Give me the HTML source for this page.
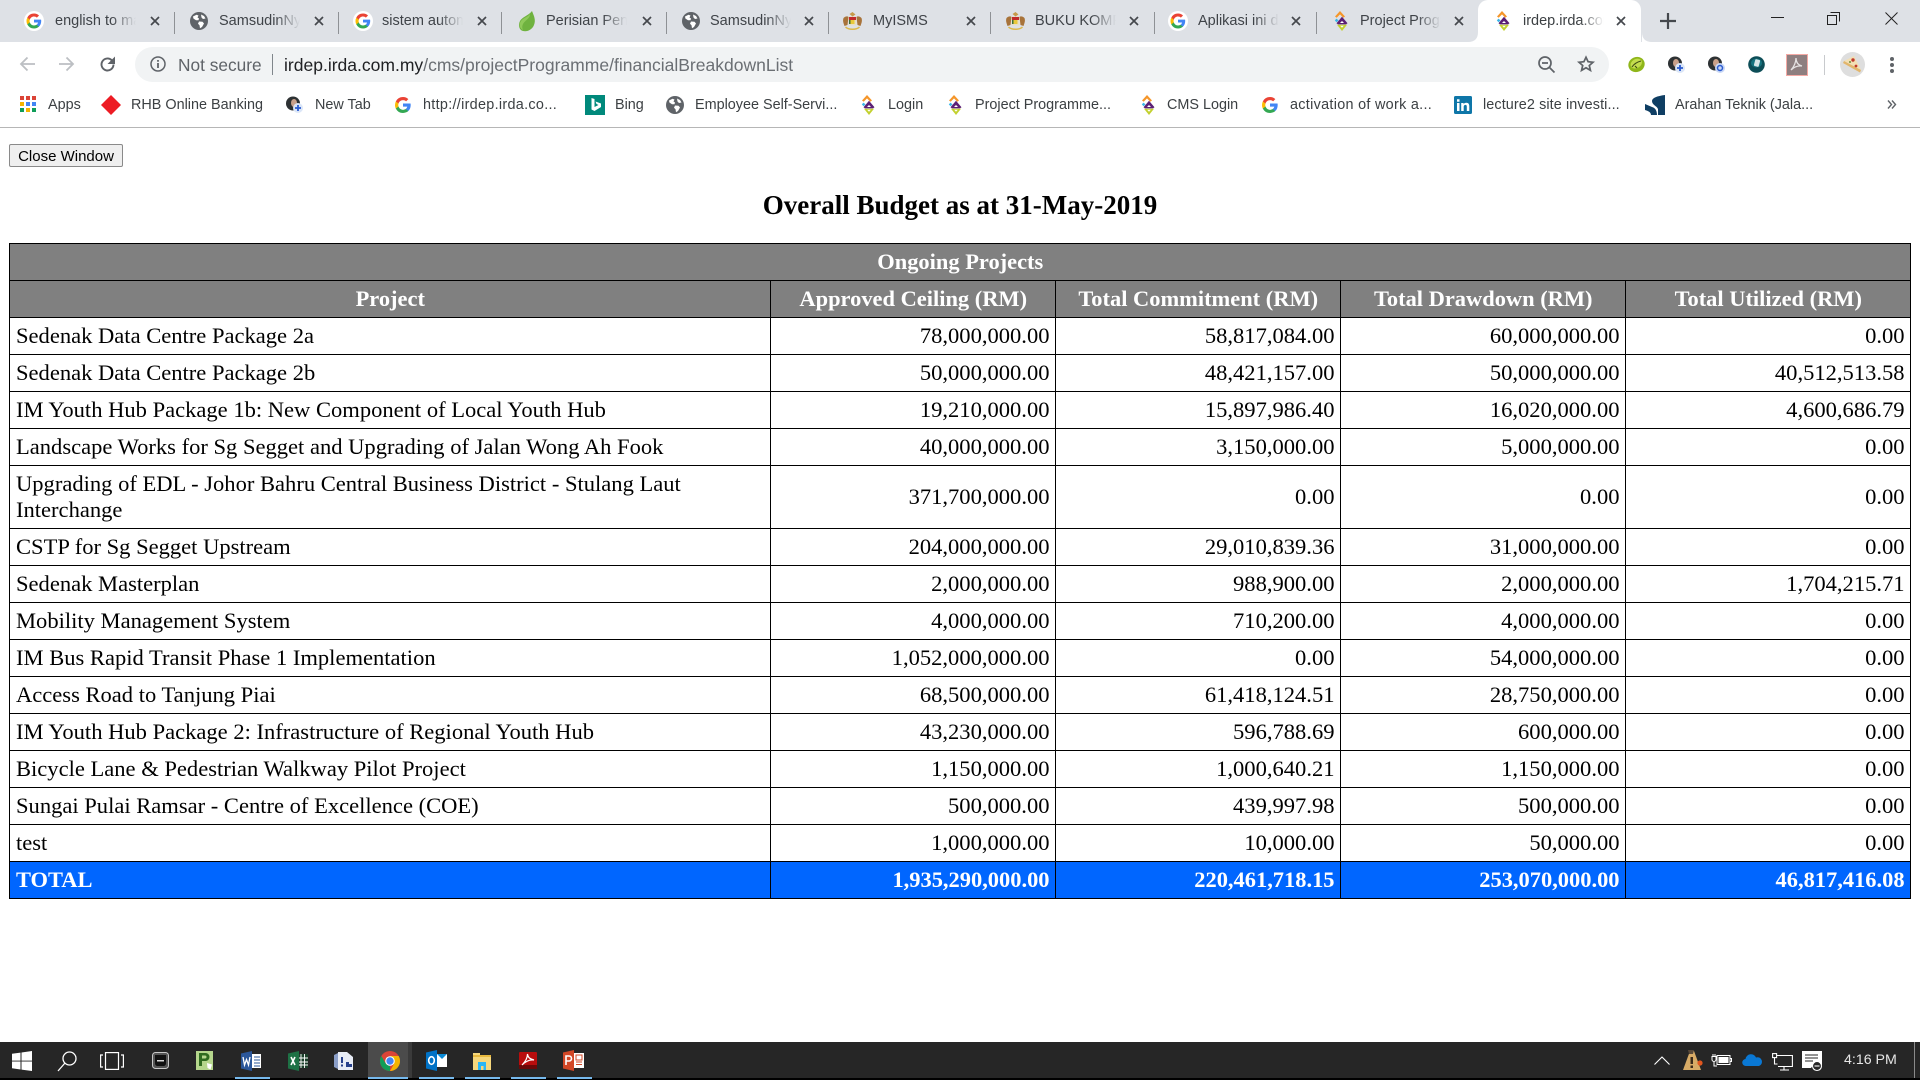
<!DOCTYPE html>
<html lang="en"><head><meta charset="utf-8"><title>irdep.irda.com.my</title>
<style>
html,body{margin:0;padding:0;width:1920px;height:1080px;overflow:hidden;background:#fff}
body{position:relative;font-family:"Liberation Sans",sans-serif}
.a{position:absolute}
.t{position:absolute;white-space:nowrap;line-height:20px}
.tab{top:11px;font-size:14.5px;color:#3f4348;width:81px;overflow:hidden;-webkit-mask-image:linear-gradient(90deg,#000 70%,transparent 100%);mask-image:linear-gradient(90deg,#000 70%,transparent 100%)}
.sep{position:absolute;top:12px;width:1px;height:22px;background:#8e9195}
.bm{top:95px;font-size:14.4px;color:#3c4043}
svg.i{position:absolute;overflow:visible}
table{position:absolute;left:9px;top:243px;width:1901px;border-collapse:collapse;table-layout:fixed;font-family:"Liberation Serif",serif;font-size:22.55px;line-height:25.6px;color:#000}
td,th{border:1px solid #000;padding:0 5.5px 0 6px;height:36px;box-sizing:border-box;vertical-align:middle}
tr{height:37px}
td+td{text-align:right}
th{background:#808080;color:#fff;font-weight:bold;text-align:center;font-size:22.45px}
.total td{background:#0066ff;color:#fff;font-weight:bold;font-size:22.45px}
button{position:absolute;left:9px;top:144px;width:114px;height:23px;font:15px "Liberation Sans",sans-serif;color:#000;background:#efefef;border:1px solid #8a8a8a;border-radius:2px;padding:2px 0 0;line-height:20px}
h1{position:absolute;left:0;top:188px;width:1920px;margin:0;text-align:center;font:bold 27px/34px "Liberation Serif",serif;color:#000}
.tb{position:absolute;left:0;top:1042px;width:1920px;height:36px;background:#262626}
.ul{position:absolute;top:1077px;height:2px;background:#76b9ed}
</style></head><body>

<svg width="0" height="0" style="position:absolute">
<defs>
<symbol id="g" viewBox="-3 -3 24 24"><circle cx="9" cy="9" r="12" fill="#fff"/><path fill="#4285F4" d="M17.64 9.2c0-.64-.06-1.25-.16-1.84H9v3.48h4.84a4.14 4.14 0 0 1-1.8 2.72v2.26h2.92c1.7-1.57 2.68-3.88 2.68-6.62z"/><path fill="#34A853" d="M9 18c2.43 0 4.47-.8 5.96-2.18l-2.92-2.26c-.8.54-1.83.86-3.04.86-2.34 0-4.32-1.58-5.03-3.7H.96v2.33A9 9 0 0 0 9 18z"/><path fill="#FBBC05" d="M3.97 10.72A5.4 5.4 0 0 1 3.68 9c0-.6.1-1.18.29-1.72V4.95H.96A9 9 0 0 0 0 9c0 1.45.35 2.83.96 4.05l3.01-2.33z"/><path fill="#EA4335" d="M9 3.58c1.32 0 2.5.45 3.44 1.35l2.58-2.59C13.46.89 11.43 0 9 0A9 9 0 0 0 .96 4.95l3.01 2.33C4.68 5.16 6.66 3.58 9 3.58z"/></symbol>
<symbol id="globe" viewBox="0 0 18 18"><circle cx="9" cy="9" r="9" fill="#5f6368"/><path fill="#fff" d="M3 4.500l3.500-1.800 2 .8-1 2 1.500 1-.5 1.700H6L3.400 6.500zM11 2.500l3 1.500 1.500 2.500-2.500.5-1.500-1.500zM9 9.500l3.500.3 1.500 1.700-2 3.500-2 1.200-.5-3-1.500-1.500z"/></symbol>
<symbol id="irda" viewBox="0 0 16 20"><path fill="#f5962a" d="M7 0l5 5.500-1.700 1.200L7 3.400 3.700 6.700 2 5.500z"/><path fill="#38b6e8" d="M3.500 7.600l2 1.800-2 1.800-1.700-1.800z"/><path fill="#5b1f75" d="M9 5.800l5.500 6.400-1.500 1.200H5l-1.500-1.200z"/><path fill="#fff" d="M9 10l2 2H7z"/><path fill="#c3d12f" d="M4 13.800h10L9 20z"/><path fill="#fff" d="M7.200 14.800h3.600L9 16.800z"/></symbol>
<symbol id="crest" viewBox="0 0 20 20"><path fill="#c69a4a" d="M10 1l3 2.500-3 2-3-2.500z"/><path fill="#a8733a" d="M1 7c2-2 4-2 5-1l-1 8-3 1c-1-3-2-5-1-8zM19 7c-2-2-4-2-5-1l1 8 3 1c1-3 2-5 1-8z"/><rect x="6" y="5.500" width="8" height="9" rx="1" fill="#e8dfc4"/><rect x="6.500" y="6" width="7" height="3" fill="#c22b2b"/><rect x="8" y="9" width="4" height="4" fill="#e9c93a"/><path fill="#3d6f3a" d="M6.500 9H8v4H6.500z"/><path fill="none" stroke="#dcb84a" stroke-width="1.500" d="M3 16c3 3 11 3 14 0"/></symbol>
<symbol id="x" viewBox="0 0 10 10"><path d="M1 1l8 8M9 1l-8 8" stroke="#45484d" stroke-width="1.700" fill="none"/></symbol>
</defs></svg>

<!-- tab strip -->
<div class="a" style="left:0;top:0;width:1920px;height:42px;background:#dee1e6"></div>
<div class="a" style="left:1478px;top:0;width:163px;height:42px;background:#fff;border-radius:10px 10px 0 0"></div>
<svg class="i" style="left:1468px;top:32px" width="184" height="10"><path d="M0 10q10 0 10-10v10zM184 10q-10 0-10-10v10z" fill="#fff"/></svg>

<div class="sep" style="left:174px"></div><div class="sep" style="left:338px"></div><div class="sep" style="left:501px"></div><div class="sep" style="left:666px"></div><div class="sep" style="left:828px"></div><div class="sep" style="left:990px"></div><div class="sep" style="left:1154px"></div><div class="sep" style="left:1316px"></div>

<svg class="i" style="left:24px;top:11px" width="20" height="20"><use href="#g"/></svg>
<div class="t tab" style="left:55px">english to malay</div>
<svg class="i" style="left:150px;top:16px" width="10" height="10"><use href="#x"/></svg>

<svg class="i" style="left:190px;top:12px" width="18" height="18"><use href="#globe"/></svg>
<div class="t tab" style="left:219px">SamsudinNyaman</div>
<svg class="i" style="left:314px;top:16px" width="10" height="10"><use href="#x"/></svg>

<svg class="i" style="left:353px;top:11px" width="20" height="20"><use href="#g"/></svg>
<div class="t tab" style="left:382px">sistem automasi</div>
<svg class="i" style="left:477px;top:16px" width="10" height="10"><use href="#x"/></svg>

<svg class="i" style="left:517px;top:11px" width="20" height="21" viewBox="0 0 20 21"><path fill="#6fb23f" d="M15 0C17 5 19 9 17 14c-2 5-7 7-11 6C2 19 1 14 3 10 5 6 11 5 15 0z"/><path fill="#8fc95a" d="M13 3C13 8 8 9 6 13c-1 2-1 4 0 6-4-2-4-6-2-9 2-3 7-4 9-7z"/></svg>
<div class="t tab" style="left:546px">Perisian Pengurusan</div>
<svg class="i" style="left:642px;top:16px" width="10" height="10"><use href="#x"/></svg>

<svg class="i" style="left:682px;top:12px" width="18" height="18"><use href="#globe"/></svg>
<div class="t tab" style="left:710px">SamsudinNyaman</div>
<svg class="i" style="left:804px;top:16px" width="10" height="10"><use href="#x"/></svg>

<svg class="i" style="left:842px;top:11px" width="21" height="20"><use href="#crest"/></svg>
<div class="t tab" style="left:873px">MyISMS</div>
<svg class="i" style="left:966px;top:16px" width="10" height="10"><use href="#x"/></svg>

<svg class="i" style="left:1005px;top:11px" width="21" height="20"><use href="#crest"/></svg>
<div class="t tab" style="left:1035px">BUKU KOMPILASI</div>
<svg class="i" style="left:1129px;top:16px" width="10" height="10"><use href="#x"/></svg>

<svg class="i" style="left:1168px;top:11px" width="20" height="20"><use href="#g"/></svg>
<div class="t tab" style="left:1198px">Aplikasi ini dapat</div>
<svg class="i" style="left:1291px;top:16px" width="10" height="10"><use href="#x"/></svg>

<svg class="i" style="left:1333px;top:11px" width="16" height="20"><use href="#irda"/></svg>
<div class="t tab" style="left:1360px">Project Programme</div>
<svg class="i" style="left:1454px;top:16px" width="10" height="10"><use href="#x"/></svg>

<svg class="i" style="left:1495px;top:11px" width="16" height="20"><use href="#irda"/></svg>
<div class="t tab" style="left:1523px;width:81px;color:#3c4043">irdep.irda.com.my</div>
<svg class="i" style="left:1616px;top:16px" width="10" height="10"><use href="#x"/></svg>

<svg class="i" style="left:1660px;top:13px" width="16" height="16"><path d="M8 0v16M0 8h16" stroke="#45484d" stroke-width="2.200"/></svg>

<!-- window controls -->
<svg class="i" style="left:1771px;top:17px" width="13" height="1"><rect width="13" height="1" fill="#222"/></svg>
<svg class="i" style="left:1827px;top:12px" width="13" height="13" fill="none" stroke="#222"><path d="M3.500.5h9v9"/><rect x=".5" y="3.500" width="9" height="9" fill="#dee1e6"/></svg>
<svg class="i" style="left:1885px;top:12px" width="13" height="13" fill="none" stroke="#222"><path d="M.5.500l12 12M12.500.5l-12 12"/></svg>

<!-- toolbar -->
<svg class="i" style="left:19px;top:56px" width="16" height="16" fill="none" stroke="#bcbfc3" stroke-width="1.800"><path d="M16 8H2M8.500 1.500L2 8l6.500 6.500"/></svg>
<svg class="i" style="left:59px;top:56px" width="16" height="16" fill="none" stroke="#bcbfc3" stroke-width="1.800"><path d="M0 8h14M7.500 1.500L14 8l-6.500 6.500"/></svg>
<svg class="i" style="left:99px;top:56px" width="17" height="17" viewBox="0 0 17 17" fill="none"><path d="M14.500 8.500a6 6 0 1 1-1.800-4.300L15 6.500" stroke="#5f6368" stroke-width="1.900"/><path d="M16 0.500v7.500h-7.500z" fill="#5f6368"/></svg>

<div class="a" style="left:135px;top:47px;width:1474px;height:35px;border-radius:18px;background:#f1f3f4"></div>
<svg class="i" style="left:150px;top:56px" width="16" height="16" fill="none" stroke="#5f6368" stroke-width="1.500"><circle cx="8" cy="8" r="7"/><path d="M8 4v1.800M8 7v5" stroke-width="1.800"/></svg>
<div class="t" style="left:178px;top:55px;font-size:17.3px;color:#5f6368">Not secure</div>
<div class="a" style="left:272px;top:54px;width:1px;height:21px;background:#80868b"></div>
<div class="t" style="left:284px;top:55px;font-size:17.53px;color:#202124">irdep.irda.com.my<span style="color:#6b6f74">/cms/projectProgramme/financialBreakdownList</span></div>

<svg class="i" style="left:1538px;top:56px" width="17" height="17" fill="none" stroke="#5f6368" stroke-width="1.700"><circle cx="7" cy="7" r="6"/><path d="M11.500 11.500L16.500 16.500M4 7h6"/></svg>
<svg class="i" style="left:1577px;top:55px" width="18" height="18" viewBox="0 0 24 24" fill="none" stroke="#5f6368" stroke-width="2.300"><path d="M12 3l2.800 6 6.500.7-4.900 4.300 1.500 6.500L12 17l-5.900 3.500 1.500-6.500L2.700 9.700 9.200 9z"/></svg>

<svg class="i" style="left:1628px;top:56px" width="17" height="17"><ellipse cx="8.500" cy="8.500" rx="8.300" ry="7.500" fill="#8fb61a" transform="rotate(-25 8.500 8.500)"/><ellipse cx="8.500" cy="7.500" rx="6" ry="4.500" fill="#c3dc4e" transform="rotate(-30 8.500 8)"/><path d="M4 11c2-3 5-5 9-6M7 10l2 2" stroke="#3d4a14" stroke-width="1.100" fill="none"/></svg>
<svg class="i" style="left:1668px;top:56px" width="17" height="17"><circle cx="7" cy="7.500" r="7" fill="#2d3133"/><ellipse cx="8" cy="7" rx="3" ry="4" fill="#c9a08a"/><circle cx="12" cy="12" r="5" fill="#dbe6f7"/><path d="M12 9v6M9 12h6" stroke="#2a5bd0" stroke-width="1.800"/></svg>
<svg class="i" style="left:1708px;top:56px" width="17" height="17"><circle cx="7" cy="7.500" r="7" fill="#2d3133"/><ellipse cx="8" cy="7" rx="3" ry="4" fill="#c9a08a"/><circle cx="12" cy="12" r="5" fill="#c8d7f5"/><circle cx="12" cy="12" r="2.500" fill="none" stroke="#2a5bd0" stroke-width="1.500"/></svg>
<svg class="i" style="left:1748px;top:56px" width="17" height="17"><circle cx="8.500" cy="8.500" r="8.300" fill="#0d4d57"/><ellipse cx="8.500" cy="7" rx="5.500" ry="4.500" fill="#17737f"/><rect x="6.500" y="3.500" width="5" height="7" rx="1" fill="#d8e6e8" transform="rotate(15 9 7)"/></svg>
<div class="a" style="left:1786px;top:54px;width:20px;height:20px;background:#8e7f80;border:1px solid #f4a9a4"></div>
<svg class="i" style="left:1789px;top:57px" width="15" height="15" fill="none" stroke="#e6e2e2" stroke-width="1.300"><path d="M2 13C5 10 7 5 7 1c0 4 2 7 6 8-4-.5-8 1-11 4z"/></svg>
<div class="a" style="left:1824px;top:55px;width:1px;height:20px;background:#c8cacd"></div>
<div class="a" style="left:1840px;top:52px;width:25px;height:25px;border-radius:50%;background:#dedede"></div>
<svg class="i" style="left:1843px;top:55px" width="19" height="19"><path d="M1 6L11 1 18 15z" fill="#f3dfb4"/><path d="M1 6L18 15l-1 2.500L0 8z" fill="#e2b66c"/><circle cx="10" cy="5" r="1.700" fill="#c0392b"/><circle cx="13" cy="11" r="1.400" fill="#c0392b"/><circle cx="7" cy="7" r="1" fill="#6b8e3a"/></svg>
<svg class="i" style="left:1889px;top:56px" width="6" height="18" fill="#5f6368"><circle cx="3" cy="3" r="2"/><circle cx="3" cy="9" r="2"/><circle cx="3" cy="15" r="2"/></svg>

<!-- bookmarks -->
<svg class="i" style="left:20px;top:96px" width="16" height="16"><g><rect width="4" height="4" fill="#db4437"/><rect x="6" width="4" height="4" fill="#db4437"/><rect x="12" width="4" height="4" fill="#db4437"/><rect y="6" width="4" height="4" fill="#f4b400"/><rect x="6" y="6" width="4" height="4" fill="#4285f4"/><rect x="12" y="6" width="4" height="4" fill="#4285f4"/><rect y="12" width="4" height="4" fill="#0f9d58"/><rect x="6" y="12" width="4" height="4" fill="#f4b400"/><rect x="12" y="12" width="4" height="4" fill="#0f9d58"/></g></svg>
<div class="t bm" style="left:48px">Apps</div>
<svg class="i" style="left:101px;top:95px" width="20" height="20"><path d="M10 0l10 10-10 10L0 10z" fill="#ed1c24"/></svg>
<div class="t bm" style="left:131px">RHB Online Banking</div>
<svg class="i" style="left:286px;top:96px" width="17" height="17"><circle cx="7" cy="7.500" r="7" fill="#2d3133"/><ellipse cx="8" cy="7" rx="3" ry="4" fill="#c9a08a"/><circle cx="12" cy="12" r="5" fill="#dbe6f7"/><path d="M12 9v6M9 12h6" stroke="#2a5bd0" stroke-width="1.800"/></svg>
<div class="t bm" style="left:315px">New Tab</div>
<svg class="i" style="left:395px;top:97px" width="16" height="16" viewBox="0 0 18 18"><path fill="#4285F4" d="M17.640 9.200c0-.64-.06-1.250-.16-1.840H9v3.480h4.840a4.140 4.140 0 0 1-1.800 2.720v2.260h2.920c1.700-1.570 2.680-3.880 2.680-6.620z"/><path fill="#34A853" d="M9 18c2.430 0 4.470-.8 5.960-2.180l-2.920-2.260c-.8.540-1.830.86-3.040.86-2.340 0-4.320-1.580-5.030-3.700H.96v2.330A9 9 0 0 0 9 18z"/><path fill="#FBBC05" d="M3.970 10.720A5.400 5.400 0 0 1 3.680 9c0-.6.100-1.180.29-1.720V4.950H.96A9 9 0 0 0 0 9c0 1.450.35 2.830.96 4.050l3.010-2.330z"/><path fill="#EA4335" d="M9 3.580c1.320 0 2.500.45 3.440 1.350l2.580-2.590C13.460.89 11.430 0 9 0A9 9 0 0 0 .96 4.950l3.010 2.330C4.680 5.160 6.660 3.580 9 3.580z"/></svg>
<div class="t bm" style="left:423px;letter-spacing:.3px">http://irdep.irda.co...</div>
<svg class="i" style="left:585px;top:95px" width="20" height="20"><rect width="20" height="20" fill="#00897b"/><path d="M6.500 3l3 1v8l4-2-2-1-1-2.500 5.500 2v3.500l-6.500 4-3-1.500z" fill="#fff"/></svg>
<div class="t bm" style="left:615px">Bing</div>
<svg class="i" style="left:666px;top:96px" width="18" height="18"><use href="#globe"/></svg>
<div class="t bm" style="left:695px">Employee Self-Servi...</div>
<svg class="i" style="left:860px;top:95px" width="16" height="20"><use href="#irda"/></svg>
<div class="t bm" style="left:888px">Login</div>
<svg class="i" style="left:947px;top:95px" width="16" height="20"><use href="#irda"/></svg>
<div class="t bm" style="left:975px">Project Programme...</div>
<svg class="i" style="left:1140px;top:95px" width="16" height="20"><use href="#irda"/></svg>
<div class="t bm" style="left:1167px">CMS Login</div>
<svg class="i" style="left:1262px;top:97px" width="16" height="16" viewBox="0 0 18 18"><path fill="#4285F4" d="M17.640 9.200c0-.64-.06-1.250-.16-1.840H9v3.480h4.840a4.140 4.140 0 0 1-1.800 2.720v2.260h2.920c1.700-1.570 2.680-3.880 2.680-6.620z"/><path fill="#34A853" d="M9 18c2.430 0 4.470-.8 5.960-2.180l-2.920-2.260c-.8.540-1.830.86-3.040.86-2.340 0-4.320-1.580-5.030-3.700H.96v2.330A9 9 0 0 0 9 18z"/><path fill="#FBBC05" d="M3.970 10.720A5.400 5.400 0 0 1 3.680 9c0-.6.100-1.180.29-1.720V4.950H.96A9 9 0 0 0 0 9c0 1.450.35 2.830.96 4.050l3.010-2.330z"/><path fill="#EA4335" d="M9 3.580c1.320 0 2.500.45 3.440 1.350l2.580-2.590C13.460.89 11.430 0 9 0A9 9 0 0 0 .96 4.950l3.010 2.330C4.680 5.160 6.660 3.580 9 3.580z"/></svg>
<div class="t bm" style="left:1290px;letter-spacing:.3px">activation of work a...</div>
<svg class="i" style="left:1454px;top:96px" width="18" height="18"><rect width="18" height="18" rx="1.500" fill="#0e76a8"/><path d="M3 7h2.500v8H3zM3 3.300h2.500v2.400H3zM7.200 7h2.400v1.200C10.200 7.300 11.200 6.800 12.300 6.800 14.500 6.800 15.300 8.200 15.300 10.300V15h-2.500v-4.300c0-1-.3-1.800-1.300-1.800s-1.800.8-1.800 1.900V15H7.200z" fill="#fff"/></svg>
<div class="t bm" style="left:1483px;letter-spacing:.1px">lecture2 site investi...</div>
<svg class="i" style="left:1645px;top:95px" width="20" height="20"><path d="M7 6c0-3 5-5 13-6v20h-7v-6c-1-3-6-4-6-8z" fill="#0f3e63"/><path d="M0 9l7 3c4 1 5 5 5 8H6c0-3-3-4-6-5z" fill="#0f3e63"/></svg>
<div class="t bm" style="left:1675px">Arahan Teknik (Jala...</div>
<svg class="i" style="left:1887px;top:100px" width="9" height="9" fill="none" stroke="#5f6368" stroke-width="1.400"><path d="M1 .500l3.500 4-3.500 4M5 .500l3.500 4-3.500 4"/></svg>
<div class="a" style="left:0;top:127px;width:1920px;height:1px;background:#b6b6b6"></div>

<!-- page -->
<button type="button">Close Window</button>
<h1>Overall Budget as at 31-May-2019</h1>

<table>
<colgroup><col style="width:761px"><col style="width:285px"><col style="width:285px"><col style="width:285px"><col style="width:285px"></colgroup>
<tr><th colspan="5">Ongoing Projects</th></tr>
<tr><th>Project</th><th>Approved Ceiling (RM)</th><th>Total Commitment (RM)</th><th>Total Drawdown (RM)</th><th>Total Utilized (RM)</th></tr>
<tr><td>Sedenak Data Centre Package 2a</td><td>78,000,000.00</td><td>58,817,084.00</td><td>60,000,000.00</td><td>0.00</td></tr>
<tr><td>Sedenak Data Centre Package 2b</td><td>50,000,000.00</td><td>48,421,157.00</td><td>50,000,000.00</td><td>40,512,513.58</td></tr>
<tr><td>IM Youth Hub Package 1b: New Component of Local Youth Hub</td><td>19,210,000.00</td><td>15,897,986.40</td><td>16,020,000.00</td><td>4,600,686.79</td></tr>
<tr><td>Landscape Works for Sg Segget and Upgrading of Jalan Wong Ah Fook</td><td>40,000,000.00</td><td>3,150,000.00</td><td>5,000,000.00</td><td>0.00</td></tr>
<tr style="height:63px"><td>Upgrading of EDL - Johor Bahru Central Business District - Stulang Laut Interchange</td><td>371,700,000.00</td><td>0.00</td><td>0.00</td><td>0.00</td></tr>
<tr><td>CSTP for Sg Segget Upstream</td><td>204,000,000.00</td><td>29,010,839.36</td><td>31,000,000.00</td><td>0.00</td></tr>
<tr><td>Sedenak Masterplan</td><td>2,000,000.00</td><td>988,900.00</td><td>2,000,000.00</td><td>1,704,215.71</td></tr>
<tr><td>Mobility Management System</td><td>4,000,000.00</td><td>710,200.00</td><td>4,000,000.00</td><td>0.00</td></tr>
<tr><td>IM Bus Rapid Transit Phase 1 Implementation</td><td>1,052,000,000.00</td><td>0.00</td><td>54,000,000.00</td><td>0.00</td></tr>
<tr><td>Access Road to Tanjung Piai</td><td>68,500,000.00</td><td>61,418,124.51</td><td>28,750,000.00</td><td>0.00</td></tr>
<tr><td>IM Youth Hub Package 2: Infrastructure of Regional Youth Hub</td><td>43,230,000.00</td><td>596,788.69</td><td>600,000.00</td><td>0.00</td></tr>
<tr><td>Bicycle Lane &amp; Pedestrian Walkway Pilot Project</td><td>1,150,000.00</td><td>1,000,640.21</td><td>1,150,000.00</td><td>0.00</td></tr>
<tr><td>Sungai Pulai Ramsar - Centre of Excellence (COE)</td><td>500,000.00</td><td>439,997.98</td><td>500,000.00</td><td>0.00</td></tr>
<tr><td>test</td><td>1,000,000.00</td><td>10,000.00</td><td>50,000.00</td><td>0.00</td></tr>
<tr class="total"><td>TOTAL</td><td>1,935,290,000.00</td><td>220,461,718.15</td><td>253,070,000.00</td><td>46,817,416.08</td></tr>
</table>

<!-- taskbar -->
<div class="a" style="left:0;top:1078px;width:1920px;height:2px;background:#000"></div>
<div class="tb"></div>
<div class="a" style="left:368px;top:1042px;width:40px;height:36px;background:#4b4b4b"></div>
<div class="a" style="left:408px;top:1042px;width:4px;height:36px;background:#3a3a3a"></div>
<div class="ul" style="left:235px;width:35px"></div>
<div class="ul" style="left:368px;width:40px"></div>
<div class="ul" style="left:419px;width:35px"></div>
<div class="ul" style="left:465px;width:35px"></div>
<div class="ul" style="left:511px;width:35px"></div>
<div class="ul" style="left:557px;width:35px"></div>

<svg class="i" style="left:12px;top:1051px" width="20" height="20"><path d="M0 2.800L8.500 1.600v8H0zM9.500 1.500L20 0v9.600H9.500zM0 10.500h8.500v8L0 17.300zM9.500 10.500H20V20L9.500 18.600z" fill="#fff"/></svg>
<svg class="i" style="left:57px;top:1051px" width="20" height="20" fill="none" stroke="#fff" stroke-width="1.300"><circle cx="12.500" cy="7.500" r="6.500"/><path d="M8 12L1 20"/></svg>
<svg class="i" style="left:100px;top:1052px" width="24" height="18" fill="none" stroke="#fff" stroke-width="1.200"><rect x="5.500" y=".6" width="13" height="16.800"/><path d="M3 3H.6v12H3M21 3h2.400v12H21"/></svg>
<svg class="i" style="left:152px;top:1052px" width="17" height="17"><rect x=".5" y=".5" width="16" height="16" rx="3" fill="#555" stroke="#c8c8c8"/><path d="M3 3h11v8c0 2-1 3-3 3H6c-2 0-3-1-3-3z" fill="#111"/><rect x="5" y="8" width="7" height="1.500" fill="#d8d8d8"/></svg>
<svg class="i" style="left:196px;top:1051px" width="17" height="19"><rect width="17" height="19" fill="#b5d68c"/><path d="M3 2h6.500a3.500 3.500 0 0 1 0 8H6v5H3zM6 4.500v3h3a1.500 1.500 0 0 0 0-3z" fill="#2f6b1f"/><path d="M11 12l5 1.500-1.500 5-3-1.500z" fill="#fff"/></svg>
<svg class="i" style="left:241px;top:1051px" width="21" height="20"><path d="M0 2.500L11 0v20L0 17.500z" fill="#2b579a"/><rect x="11" y="3" width="9" height="14" fill="#fff"/><path d="M13 6h6M13 9h6M13 12h6M13 15h6" stroke="#2b579a"/><path d="M2 6l1.500 8 2-5.500 2 5.500L9 6" fill="none" stroke="#fff" stroke-width="1.300"/></svg>
<svg class="i" style="left:288px;top:1051px" width="20" height="20"><path d="M0 2.500L11 0v20L0 17.500z" fill="#1e7145"/><rect x="11" y="3" width="9" height="14" fill="#1b3f2a"/><path d="M13 3v14M16.500 3v14M11 7h9M11 11h9M11 14h9" stroke="#fff" stroke-width=".9"/><path d="M3 6l4 8M7 6l-4 8" stroke="#fff" stroke-width="1.600"/></svg>
<svg class="i" style="left:334px;top:1052px" width="19" height="18"><path d="M4 0h9l6 5v13H4z" fill="#e8ecf6"/><path d="M4 1L0 3v12l4 2z" fill="#8a9ec8"/><path d="M7 5h2v6H7zM7 12.500h2v2H7z" fill="#27408b"/><path d="M12 10h3v2h3v3h-6z" fill="#27408b"/></svg>
<svg class="i" style="left:380px;top:1051px" width="20" height="20" viewBox="0 0 20 20"><circle cx="10" cy="10" r="10" fill="#db4437"/><path d="M10 20a10 10 0 0 1-8.660-15L6 13l4 2z" fill="#0f9d58"/><path d="M10 5h8.660A10 10 0 0 1 10 20l4-7z" fill="#f4b400"/><circle cx="10" cy="10" r="4.800" fill="#fff"/><circle cx="10" cy="10" r="3.700" fill="#4285f4"/></svg>
<svg class="i" style="left:426px;top:1050px" width="21" height="21"><path d="M0 2.500L11 0v21L0 18.500z" fill="#0072c6"/><rect x="11" y="4" width="10" height="13" fill="#fff"/><path d="M11 4h10l-5 5z" fill="#0a8ad6"/><ellipse cx="5.500" cy="10.500" rx="2.800" ry="3.800" fill="none" stroke="#fff" stroke-width="1.600"/></svg>
<svg class="i" style="left:473px;top:1053px" width="18" height="17"><path d="M0 0h7v2h11v15H0z" fill="#f6d77c"/><rect y="2" width="18" height="2" fill="#e8b93f"/><path d="M5 9h8v8H5z" fill="#29b6f6"/><rect x="8" y="13" width="2.500" height="4" fill="#f6d77c"/></svg>
<svg class="i" style="left:519px;top:1052px" width="18" height="17"><rect width="18" height="14" rx="1" fill="#b80d0d"/><rect y="13" width="18" height="4" fill="#6b0808"/><path d="M3 13C6 10 8.500 6 8.500 2c.5 4 3 5 6.500 6-4-.5-8 1-12 5z" fill="none" stroke="#fff" stroke-width="1.200"/></svg>
<svg class="i" style="left:563px;top:1050px" width="21" height="21"><path d="M0 2.500L11 0v21L0 18.500z" fill="#d24726"/><rect x="11" y="3" width="10" height="15" fill="#fff"/><path d="M13 5h6v5h-6zM13 12h6M13 14.500h6" stroke="#d24726" fill="none"/><path d="M3 15V6h3a2.500 2.500 0 0 1 0 5H3" fill="none" stroke="#fff" stroke-width="1.600"/></svg>

<!-- tray -->
<svg class="i" style="left:1654px;top:1056px" width="16" height="9" fill="none" stroke="#fff" stroke-width="1.100"><path d="M.5 8.500L8 1l7.500 7.500"/></svg>
<svg class="i" style="left:1682px;top:1050px" width="21" height="21"><path d="M8 1h4l7 19H1z" fill="#d8ab66"/><path d="M6 0h6l-1 4H7z" fill="#5a4a3a"/><rect x="8.500" y="7" width="2.500" height="7" fill="#3a2a1a"/><rect x="8.500" y="15.500" width="2.500" height="2.500" fill="#3a2a1a"/><circle cx="18" cy="13" r="2.600" fill="#e2571e"/></svg>
<svg class="i" style="left:1712px;top:1053px" width="20" height="14" fill="none" stroke="#fff"><rect x="5" y="2.500" width="13" height="9"/><rect x="6.500" y="4" width="10" height="6" fill="#fff" stroke="none"/><path d="M18.500 5.500h1v3h-1M0 3.500h4v3a2 2 0 0 1-4 0zM1 1v2.500M3 1v2.500M2 8.500V13h3"/></svg>
<svg class="i" style="left:1742px;top:1053px" width="20" height="14"><path d="M4 13a3.500 3.500 0 0 1-.5-7 5.500 5.500 0 0 1 10.500-1.500A4.500 4.500 0 0 1 17 13z" fill="#0a78d4"/></svg>
<svg class="i" style="left:1772px;top:1053px" width="21" height="18" fill="none" stroke="#fff" stroke-width="1.100"><rect x=".6" y=".6" width="4" height="4"/><path d="M2.500 5v6h3M5 2.500h15.400v11H6M12 14v3M8 17h9"/></svg>
<svg class="i" style="left:1802px;top:1051px" width="20" height="20"><path d="M0 0h20v14h-6a6 6 0 0 0-5 3H0z" fill="#fff"/><path d="M3 4h13M3 7h13M3 10h8" stroke="#262626" stroke-width="1"/><circle cx="15" cy="15" r="4.500" fill="#262626" stroke="#fff" stroke-width="1.100"/><path d="M12.500 15h5" stroke="#fff" stroke-width="1.100"/></svg>
<div class="t" style="left:1844px;top:1050px;font-size:14.2px;color:#e6e6e6">4:16 PM</div>
<div class="a" style="left:1914px;top:1042px;width:1px;height:36px;background:#8a8a8a"></div>
</body></html>
